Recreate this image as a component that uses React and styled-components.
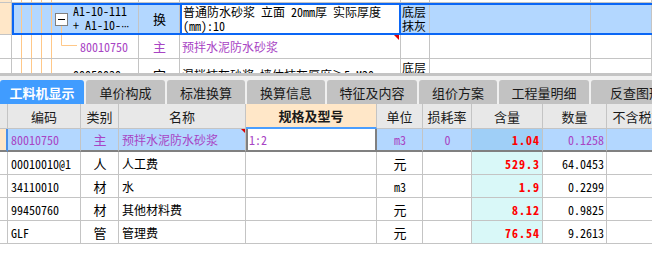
import React from "react";
import styled, { createGlobalStyle, css } from "styled-components";

const GlobalStyle = createGlobalStyle`
  body {
    margin: 0;
    background: #fff;
    font-family: "Noto Sans Mono CJK SC", "Noto Sans CJK SC", monospace;
    font-size: 12px;
    color: #000;
  }
`;

const GUIDE = "#ffc888";
const PURPLE = "#a844c4";
const LINE = "#c4c4c4";

const Page = styled.div`
  width: 652px; height: 256px; overflow: hidden; background: #fff;
`;

/* ---------- upper tree grid ---------- */
const TreeGrid = styled.div`
  height: 73px; overflow: hidden;
`;
const TreeRow = styled.div`
  display: grid;
  grid-template-columns: 12px 127px 41px 221px 29px 161px 61px;
  height: ${(p) => p.$h}px;
  position: relative;
  ${(p) => p.$selected && css`
    background: #b3d7ff;
    &::after{
      content: ""; position: absolute; left: 12px; right: -4px; top: 0; bottom: 0;
      border: 2px solid #0a66f5; pointer-events: none;
    }
  `}
`;
const TCell = styled.div`
  box-sizing: border-box;
  border-right: 1px solid ${LINE};
  border-bottom: 1px solid ${LINE};
  overflow: hidden; white-space: nowrap;
  display: flex; align-items: center;
  justify-content: ${(p) => (p.$center ? "center" : "flex-start")};
  padding-left: ${(p) => p.$pad ?? 1}px;
  line-height: 14px;
  font-size: ${(p) => p.$size ?? 12}px;
  color: ${(p) => (p.$purple ? PURPLE : "#000")};
  background: ${(p) => p.$bg ?? "transparent"};
  position: relative;
  ${(p) => p.$focus && css`
    background: #fff;
    border-left: 2px solid #0a66f5;
    border-right: 2px solid #0a66f5;
  `}
  ${(p) => p.$mark && css`
    &::after{
      content: ""; position: absolute; top: 0; right: 1px;
      border-top: 5px solid #e00000; border-left: 5px solid transparent;
    }
  `}
`;
const CodeCell = styled(TCell)`
  padding-left: 0;
  align-items: stretch;
`;
const CodeText = styled.div`
  display: flex; flex-direction: column; justify-content: center;
  line-height: 14px;
  color: ${(p) => (p.$purple ? PURPLE : "#000")};
`;
const Lines = styled.div`
  display: flex; flex-direction: column; justify-content: center;
  line-height: 14px;
  & > div { height: 14px; }
`;
const Dots = styled.span`
  font-family: "DejaVu Sans", sans-serif;
  font-size: 11px;
  letter-spacing: -1px;
`;

const Guides = ({ h, width, expander, branch, below }) => (
  <svg width={width} height={h} style={{ flex: "none" }}>
    {[9.5, 19.5, 29.5, 39.5].map((x) => (
      <line key={x} x1={x} y1={0} x2={x} y2={h} stroke={GUIDE} strokeWidth="1" />
    ))}
    {expander && (
      <g>
        <rect x="43.5" y="10.5" width="12" height="12" fill="#fff" stroke="#808080" />
        <line x1="46" y1="16.5" x2="53" y2="16.5" stroke="#000" />
        {below && <line x1="49.5" y1="23" x2="49.5" y2={h} stroke={GUIDE} />}
      </g>
    )}
    {branch && (
      <g>
        <line x1="49.5" y1="0" x2="49.5" y2="10.5" stroke={GUIDE} />
        <line x1="49.5" y1="10.5" x2="65" y2="10.5" stroke={GUIDE} />
      </g>
    )}
  </svg>
);

/* ---------- splitter & tabs ---------- */
const Splitter = styled.div`
  height: 3px; background: #c4c4c4;
`;
const TabBar = styled.div`
  display: flex; height: 24px; padding-top: 4px;
  background: #f0f0f0; overflow: hidden;
`;
const Tab = styled.div`
  flex: none; width: ${(p) => p.$w}px; margin-right: 2px;
  box-sizing: border-box;
  display: flex; align-items: center; justify-content: center;
  border-radius: 3px 3px 0 0;
  font-family: "Noto Sans CJK SC", sans-serif; font-size: 13px;
  white-space: nowrap; overflow: hidden;
  background: ${(p) => (p.$active ? "#409cff" : "#c2c2c2")};
  color: ${(p) => (p.$active ? "#fff" : "#1a1a1a")};
  font-weight: ${(p) => (p.$active ? 700 : 400)};
`;

/* ---------- lower table ---------- */
const COLS = "8px 73px 38px 127px 131px 46px 49px 71px 64px 90px";
const Table = styled.div`
  width: 652px; overflow: hidden;
`;
const HeadRow = styled.div`
  display: grid; grid-template-columns: ${COLS}; height: 25px;
`;
const HeadCell = styled.div`
  box-sizing: border-box;
  border-right: 1px solid ${LINE};
  border-bottom: ${(p) => (p.$active ? "2px solid #4a9eff" : `1px solid ${LINE}`)};
  background: ${(p) => (p.$active ? "#ffe7c8" : "#e8e8e8")};
  font-family: "Noto Sans CJK SC", sans-serif; font-size: 13px;
  font-weight: ${(p) => (p.$active ? 700 : 400)};
  color: #1a1a1a;
  display: flex; align-items: center; justify-content: center;
  white-space: nowrap; overflow: hidden;
`;
const Row = styled.div`
  display: grid; grid-template-columns: ${COLS}; height: 23px;
  ${(p) => p.$selected && css`background: #b3d7ff;`}
`;
const Cell = styled.div`
  box-sizing: border-box;
  border-right: 1px solid ${LINE};
  border-bottom: ${(p) => (p.$selected ? "2px solid #808080" : `1px solid ${LINE}`)};
  display: flex; align-items: center;
  justify-content: ${(p) => p.$align ?? "flex-start"};
  padding: 0 2px 0 3px;
  white-space: nowrap; overflow: hidden;
  font-size: ${(p) => p.$size ?? 12}px;
  color: ${(p) => (p.$selected ? PURPLE : "#000")};
  position: relative;
  ${(p) => p.$qty && css`
    background: ${p.$selected ? "#9fcff7" : "#d9f8f8"};
    color: #ff0000; font-weight: 700; letter-spacing: 1px;
  `}
  ${(p) => p.$edit && css`
    background: #fff;
    border-left: 2px solid #808080;
    border-right: 2px solid #808080;
    padding-left: 1px;
  `}
  ${(p) => p.$mark && css`
    &::after{
      content: ""; position: absolute; top: 0; right: 0;
      border-top: 4px solid #e00000; border-left: 4px solid transparent;
    }
  `}
`;
const Indicator = styled.div`
  box-sizing: border-box;
  border-right: ${(p) => (p.$selected ? "2px solid #4a90e8" : `1px solid ${LINE}`)};
  border-bottom: ${(p) => (p.$selected ? "2px solid #808080" : `1px solid ${LINE}`)};
  background: ${(p) => (p.$selected ? "#ffe7c8" : "#fff")};
`;

const tabs = [
  ["工料机显示", 84], ["单价构成", 79], ["标准换算", 78], ["换算信息", 78],
  ["特征及内容", 90], ["组价方案", 78], ["工程量明细", 90], ["反查图形", 90],
];
const heads = ["编码", "类别", "名称", "规格及型号", "单位", "损耗率", "含量", "数量", "不含税市场价"];
const rows = [
  { code: "80010750", type: "主", name: "预拌水泥防水砂浆", spec: "1:2", unit: "m3", loss: "0", qty: "1.04", amount: "0.1258", selected: true },
  { code: "00010010@1", type: "人", name: "人工费", unit: "元", qty: "529.3", amount: "64.0453" },
  { code: "34110010", type: "材", name: "水", unit: "m3", qty: "1.9", amount: "0.2299" },
  { code: "99450760", type: "材", name: "其他材料费", unit: "元", qty: "8.12", amount: "0.9825" },
  { code: "GLF", type: "管", name: "管理费", unit: "元", qty: "76.54", amount: "9.2613" },
];

export default function App() {
  return (
    <Page>
      <GlobalStyle />
      <TreeGrid>
        <TreeRow $h={3}>
          <TCell $bg="#ffe7c8" />
          <CodeCell><Guides h={3} width={61} /></CodeCell>
          <TCell /><TCell /><TCell /><TCell /><TCell />
        </TreeRow>
        <TreeRow $h={32} $selected>
          <TCell $bg="#ffe7c8" />
          <CodeCell>
            <Guides h={32} width={61} expander below />
            <CodeText>
              <div>A1-10-111</div>
              <div>+ A1-10-<Dots>···</Dots></div>
            </CodeText>
          </CodeCell>
          <TCell $center $size={13}>换</TCell>
          <TCell $focus>
            <Lines><div>普通防水砂浆 立面 20mm厚  实际厚度</div><div>(mm):10</div></Lines>
          </TCell>
          <TCell><Lines><div>底层</div><div>抹灰</div></Lines></TCell>
          <TCell /><TCell />
        </TreeRow>
        <TreeRow $h={24}>
          <TCell />
          <CodeCell>
            <Guides h={23} width={68} branch />
            <CodeText $purple>80010750</CodeText>
          </CodeCell>
          <TCell $center $size={13} $purple>主</TCell>
          <TCell $purple $pad={2} $mark>预拌水泥防水砂浆</TCell>
          <TCell /><TCell /><TCell />
        </TreeRow>
        <TreeRow $h={32}>
          <TCell />
          <CodeCell>
            <Guides h={31} width={61} />
            <CodeText>00050030</CodeText>
          </CodeCell>
          <TCell $center $size={13}>定</TCell>
          <TCell $pad={2}>混拌抹灰砂浆  墙体抹灰厚度≥5  M20</TCell>
          <TCell><Lines><div>底层</div><div>抹灰</div></Lines></TCell>
          <TCell /><TCell />
        </TreeRow>
      </TreeGrid>
      <Splitter />
      <TabBar>
        {tabs.map(([t, w], i) => (
          <Tab key={t} $w={w} $active={i === 0}>{t}</Tab>
        ))}
      </TabBar>
      <Table>
        <HeadRow>
          <HeadCell />
          {heads.map((h) => (
            <HeadCell key={h} $active={h === "规格及型号"}>{h}</HeadCell>
          ))}
        </HeadRow>
        {rows.map((r) => {
          const s = r.selected;
          return (
            <Row key={r.code} $selected={s}>
              <Indicator $selected={s} />
              <Cell $selected={s}>{r.code}</Cell>
              <Cell $selected={s} $align="center" $size={13}>{r.type}</Cell>
              <Cell $selected={s} $mark={s}>{r.name}</Cell>
              <Cell $selected={s} $edit={s}>{r.spec || ""}</Cell>
              <Cell $selected={s} $align="center" $size={r.unit === "元" ? 13 : 12}>{r.unit}</Cell>
              <Cell $selected={s} $align="center">{r.loss || ""}</Cell>
              <Cell $selected={s} $qty $align="flex-end">{r.qty}</Cell>
              <Cell $selected={s} $align="flex-end">{r.amount}</Cell>
              <Cell $selected={s} />
            </Row>
          );
        })}
      </Table>
    </Page>
  );
}
